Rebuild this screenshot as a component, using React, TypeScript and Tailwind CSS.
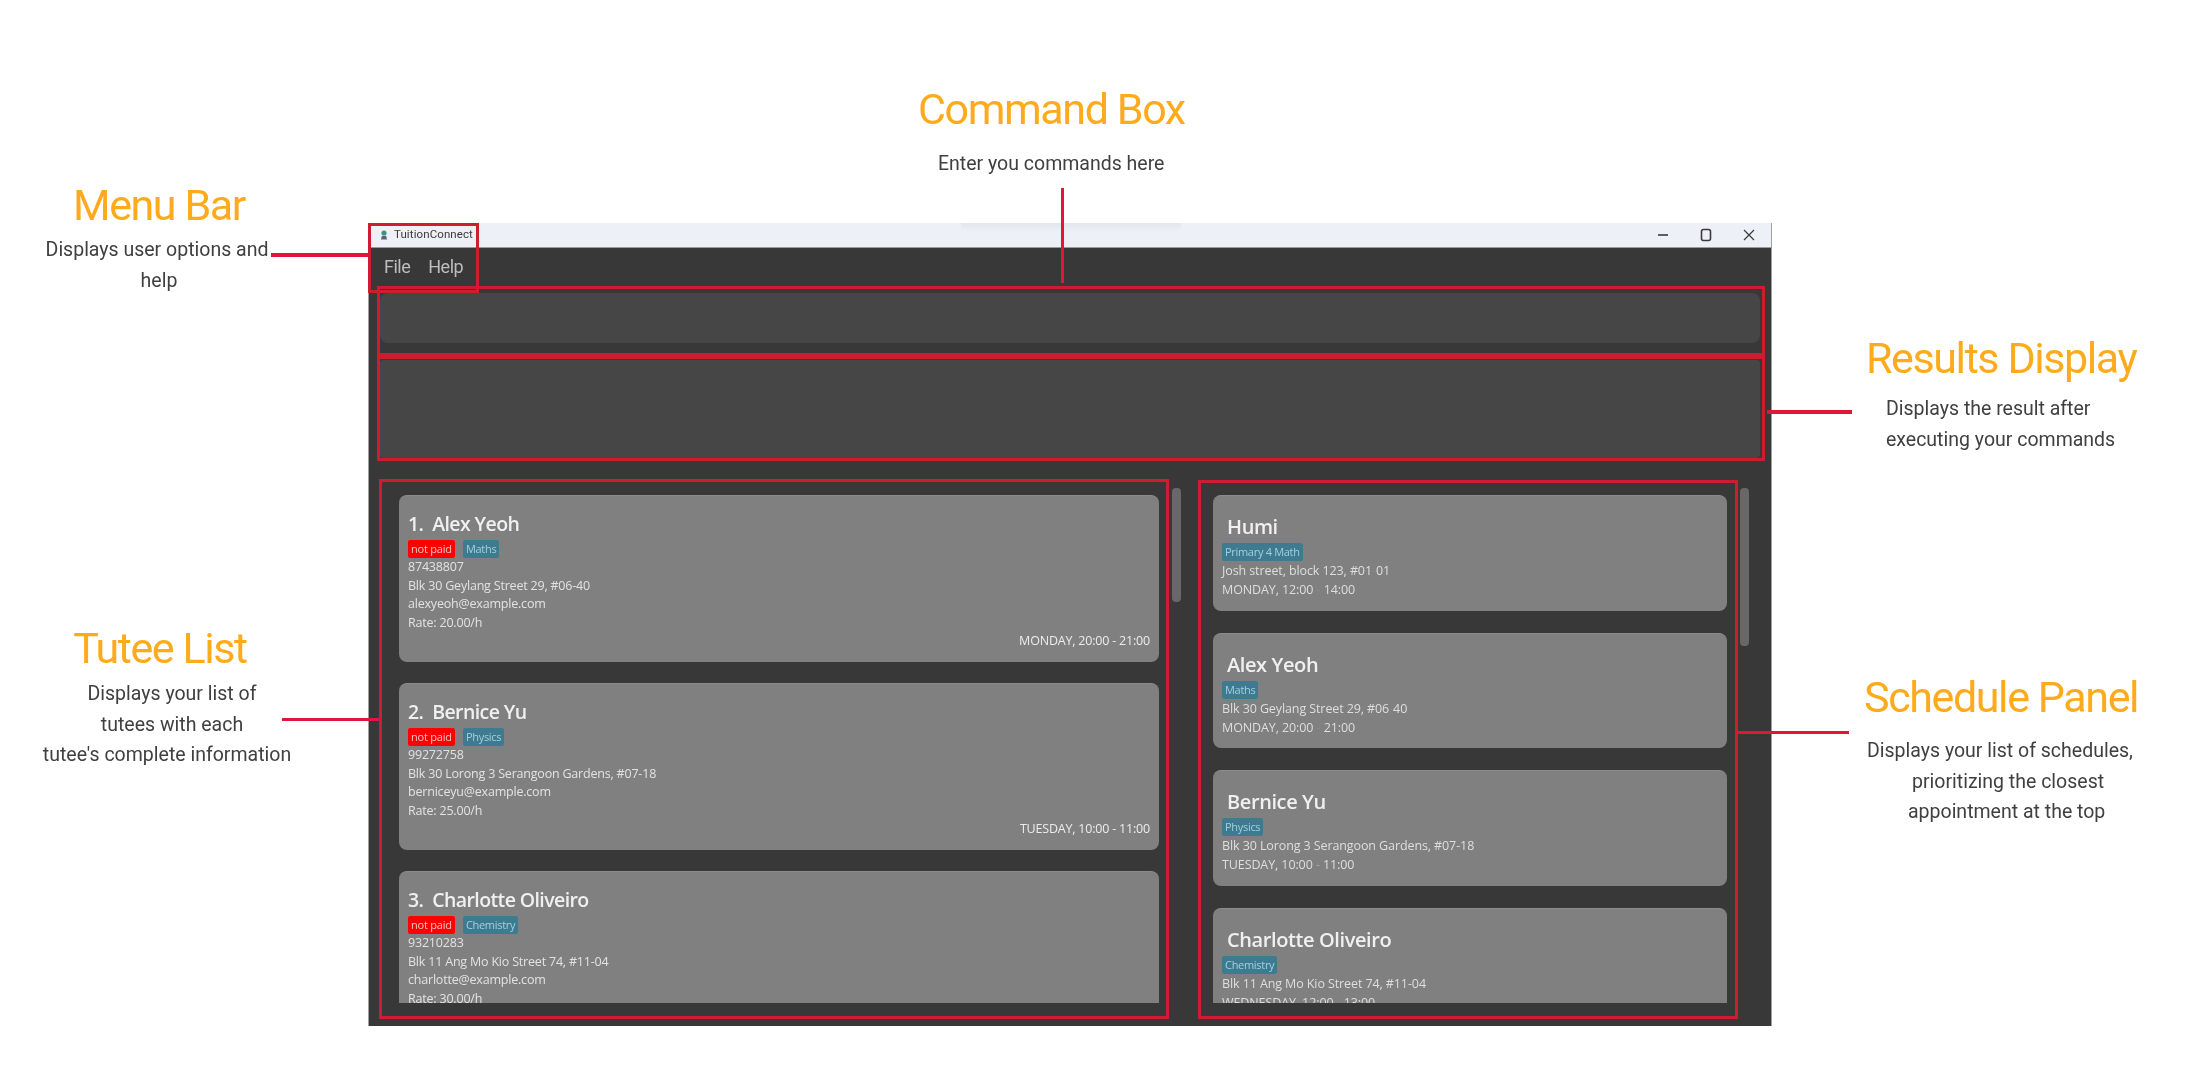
const tutees = [
  { n: "1.  Alex Yeoh", tag: "Maths", phone: "87438807", addr: "Blk 30 Geylang Street 29, #06-40", mail: "alexyeoh@example.com", rate: "Rate: 20.00/h", time: "MONDAY, 20:00 - 21:00" },
  { n: "2.  Bernice Yu", tag: "Physics", phone: "99272758", addr: "Blk 30 Lorong 3 Serangoon Gardens, #07-18", mail: "berniceyu@example.com", rate: "Rate: 25.00/h", time: "TUESDAY, 10:00 - 11:00" },
  { n: "3.  Charlotte Oliveiro", tag: "Chemistry", phone: "93210283", addr: "Blk 11 Ang Mo Kio Street 74, #11-04", mail: "charlotte@example.com", rate: "Rate: 30.00/h", time: "WEDNESDAY, 12:00 - 13:00" },
];

const schedules = [
  { n: "Humi", tag: "Primary 4 Math", a: "Josh street, block 123, #01", b: "01", t1: "MONDAY, 12:00", t2: "14:00", faint: true },
  { n: "Alex Yeoh", tag: "Maths", a: "Blk 30 Geylang Street 29, #06", b: "40", t1: "MONDAY, 20:00", t2: "21:00", faint: true },
  { n: "Bernice Yu", tag: "Physics", a: "Blk 30 Lorong 3 Serangoon Gardens, #07", b: "18", t1: "TUESDAY, 10:00", t2: "11:00", faint: false },
  { n: "Charlotte Oliveiro", tag: "Chemistry", a: "Blk 11 Ang Mo Kio Street 74, #11", b: "04", t1: "WEDNESDAY, 12:00", t2: "13:00", faint: false },
];

const heading = "text-[#fdab1c] text-[43px] leading-[50px] tracking-[-1.4px] whitespace-nowrap";
const sub = "text-[#404040] text-[19.5px] leading-[30.5px] whitespace-nowrap";
const cardFont = { fontFamily: '"Open Sans", sans-serif' };

function Tag({ children, red }: { children: string; red?: boolean }) {
  return (
    <span
      className={
        red
          ? "h-[18px] px-[3px] rounded-[2px] bg-[#ff0000] text-[#f4c4c4] text-[11px] leading-[18px] tracking-[-0.2px] whitespace-nowrap"
          : "h-[18px] px-[3px] rounded-[2px] bg-[#3e7b91] text-[#a3cfdb] text-[11px] leading-[18px] tracking-[-0.3px] whitespace-nowrap"
      }
    >
      {children}
    </span>
  );
}

function TuteeCard({ t }: { t: (typeof tutees)[number] }) {
  return (
    <div className="h-[167px] shrink-0 rounded-[8px] bg-[#808080] pt-[14px] px-[9px] border-t border-[#8b8b8b]">
      <div className="text-[#f0f0f0] text-[19.5px] leading-[28px] font-semibold whitespace-pre tracking-[-0.6px]">{t.n}</div>
      <div className="flex gap-[8px] mt-[2px]">
        <Tag red>not paid</Tag>
        <Tag>{t.tag}</Tag>
      </div>
      <div className="text-[#e2e2e2] text-[12.5px] leading-[18.6px] tracking-[-0.2px]">
        <div>{t.phone}</div>
        <div>{t.addr}</div>
        <div>{t.mail}</div>
        <div>{t.rate}</div>
        <div className="text-right text-[#ececec]">{t.time}</div>
      </div>
    </div>
  );
}

function ScheduleCard({ s }: { s: (typeof schedules)[number] }) {
  const dash = s.faint ? "opacity-10" : "opacity-40";
  return (
    <div className="h-[115.5px] shrink-0 rounded-[8px] bg-[#808080] pt-[17px] px-[9px] border-t border-[#8b8b8b]">
      <div className="pl-[5px] text-[#f0f0f0] text-[20px] leading-[28px] font-semibold whitespace-nowrap tracking-[-0.4px]">{s.n}</div>
      <div className="flex mt-[2px]">
        <Tag>{s.tag}</Tag>
      </div>
      <div className="text-[#dedede] text-[12.5px] leading-[19px] tracking-[-0.1px]">
        <div>
          {s.a}
          <span className={s.faint ? "opacity-10" : ""}>-</span>
          {s.b}
        </div>
        <div>
          {s.t1} <span className={dash}>-</span> {s.t2}
        </div>
      </div>
    </div>
  );
}

function AppIcon() {
  return (
    <svg width="8" height="10" viewBox="0 0 8 10" className="shrink-0">
      <circle cx="4" cy="3" r="2.6" fill="#3f8f8c" />
      <path d="M1 9.5 L1.8 6 H6.2 L7 9.5 Z" fill="#5a6570" />
    </svg>
  );
}

export default function App() {
  return (
    <div className="relative w-[2203px] h-[1091px] bg-white overflow-hidden flex blur-[0.5px]" style={{ fontFamily: "Roboto, sans-serif" }}>
      {/* left annotations */}
      <div className="w-[368px] shrink-0 pt-[180px]">
        <div className="w-[318px] text-center">
          <div className={heading}>Menu Bar</div>
          <div className={`${sub} mt-[5px] pr-[4px]`}>Displays user options and</div>
          <div className={sub}>help</div>
        </div>
        <div className="w-[320px] text-center mt-[327px]">
          <div className={heading}>Tutee List</div>
        </div>
        <div className="w-[344px] text-center mt-[6px]">
          <div className={sub}>Displays your list of</div>
          <div className={sub}>tutees with each</div>
          <div className={`${sub} pr-[10px]`}>tutee&apos;s complete information</div>
        </div>
      </div>

      {/* centre */}
      <div className="w-[1404px] shrink-0 pt-[84px]">
        <div className={`${heading} ml-[550px]`}>Command Box</div>
        <div className={`${sub} ml-[570px] mt-[15px]`}>Enter you commands here</div>
        <div className="mt-[43.5px] h-[803px] flex flex-col border-x border-[#a0a0a0] relative">
          <div className="h-[25px] shrink-0 bg-[#edf1f7] flex items-center pl-[11px] pr-[16px] relative border-b border-[#9a9a9a]">
            <AppIcon />
            <span className="ml-[6px] text-[#3a3a3a] text-[11.5px] tracking-[0.1px]">TuitionConnect</span>
            <div className="absolute left-[592px] top-0 w-[220px] h-[9px] bg-gradient-to-b from-[#e3e7ec] to-[#edf1f7]" />
            <div className="ml-auto flex items-center gap-[31px] text-[#3a3a3a]">
              <svg width="12" height="12" viewBox="0 0 12 12"><path d="M1 6 H11" stroke="currentColor" strokeWidth="1.6" /></svg>
              <svg width="12" height="14" viewBox="0 0 12 14"><rect x="1.5" y="1.5" width="9" height="11" rx="2" fill="none" stroke="currentColor" strokeWidth="1.6" /></svg>
              <svg width="12" height="12" viewBox="0 0 12 12"><path d="M1 1 L11 11 M11 1 L1 11" stroke="currentColor" strokeWidth="1.2" /></svg>
            </div>
          </div>
          <div className="flex-1 bg-[#383838] flex flex-col min-h-0">
            <div className="h-[45px] shrink-0 flex items-start pt-[6px] pl-[15px] gap-[18px] text-[#bdbdbd] text-[18px] leading-[26px] tracking-[-0.5px]">
              <span>File</span>
              <span>Help</span>
            </div>
            <div className="h-[50px] shrink-0 mx-[11px] rounded-[8px] bg-[#464646]" />
            <div className="h-[98px] shrink-0 mx-[11px] mt-[17px] rounded-[4px] bg-[#464646]" />
            <div className="flex pl-[30px] mt-[30px]" style={cardFont}>
              <div className="w-[760px] h-[508px] mt-[7px] overflow-hidden flex flex-col gap-[21px] shrink-0">
                {tutees.map((t) => (
                  <TuteeCard key={t.n} t={t} />
                ))}
              </div>
              <div className="ml-[13px] w-[9px] h-[114px] rounded-[4px] bg-[#686868] shrink-0" />
              <div className="ml-[32px] w-[514px] h-[508px] mt-[7px] overflow-hidden flex flex-col gap-[22px] shrink-0">
                {schedules.map((s) => (
                  <ScheduleCard key={s.n} s={s} />
                ))}
              </div>
              <div className="ml-[13px] w-[9px] h-[158px] rounded-[4px] bg-[#686868] shrink-0" />
            </div>
          </div>
        </div>
      </div>

      {/* right annotations */}
      <div className="flex-1 pt-[333px]">
        <div className={`${heading} ml-[94px]`}>Results Display</div>
        <div className="ml-[114px] mt-[11px]">
          <div className={sub}>Displays the result after</div>
          <div className={sub}>executing your commands</div>
        </div>
        <div className={`${heading} ml-[92px] mt-[217px]`}>Schedule Panel</div>
        <div className="mt-[14px]">
          <div className={`${sub} ml-[95px]`}>Displays your list of schedules,</div>
          <div className={`${sub} ml-[140px]`}>prioritizing the closest</div>
          <div className={`${sub} ml-[136px]`}>appointment at the top</div>
        </div>
      </div>

      {/* highlight boxes and leader lines, laid over the screenshot */}
      <div className="absolute left-[368px] top-[223px] w-[111px] h-[70px] border-[3px] border-[#d01c30]" />
      <div className="absolute left-[377px] top-[286px] w-[1388px] h-[70px] border-[3px] border-[#cc1c2e]" />
      <div className="absolute left-[377px] top-[356px] w-[1388px] h-[105px] border-[3px] border-[#cc1c2e]" />
      <div className="absolute left-[379px] top-[479px] w-[790px] h-[540px] border-[3px] border-[#d01c30]" />
      <div className="absolute left-[1198px] top-[480px] w-[540px] h-[539px] border-[3px] border-[#d01c30]" />
      <div className="absolute left-[271px] top-[253px] w-[97px] h-[4px] bg-[#e0163a]" />
      <div className="absolute left-[1061px] top-[188px] w-[3px] h-[95px] bg-[#e0163a]" />
      <div className="absolute left-[1767px] top-[410px] w-[85px] h-[4px] bg-[#e0163a]" />
      <div className="absolute left-[282px] top-[718px] w-[97px] h-[3px] bg-[#e0163a]" />
      <div className="absolute left-[1738px] top-[731px] w-[111px] h-[3px] bg-[#e0163a]" />
    </div>
  );
}
